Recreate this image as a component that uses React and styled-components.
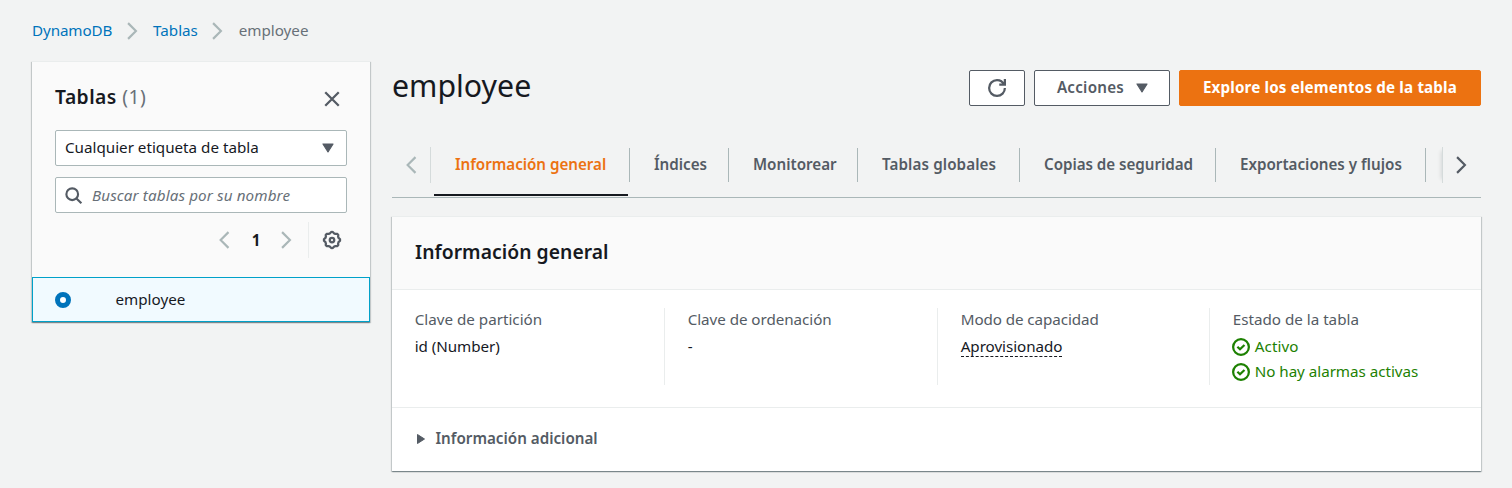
import React from "react";
import styled, { createGlobalStyle } from "styled-components";

const GlobalStyle = createGlobalStyle`
  *, *::before, *::after { box-sizing: border-box; }
  body {
    margin: 0;
    background: #f2f3f3;
    color: #16191f;
    font-family: "Noto Sans", "Open Sans", sans-serif;
    font-size: 15.2px;
    line-height: 22px;
  }
  h1, h2, p, dl, dd, dt, ul { margin: 0; padding: 0; }
  button, input { font: inherit; color: inherit; }
`;

const Svg = styled.svg`
  display: block;
  flex: none;
  width: ${(p) => p.$size || 18}px;
  height: ${(p) => p.$size || 18}px;
  fill: none;
  stroke: currentColor;
  stroke-width: ${(p) => p.$stroke || 2};
  overflow: visible;
`;

const Icon = ({ size, stroke, className, children }) => (
  <Svg viewBox="0 0 16 16" $size={size} $stroke={stroke} className={className} aria-hidden="true">
    {children}
  </Svg>
);

const AngleRight = (p) => <Icon stroke={1.9} {...p}><path d="m4.5 1 7 7-7 7" /></Icon>;
const AngleLeft = (p) => <Icon stroke={1.9} {...p}><path d="m12 1-7 7 7 7" /></Icon>;
const Close = (p) => <Icon {...p}><path d="m2 2 12 12M14 2 2 14" /></Icon>;
const Search = (p) => <Icon {...p}><circle cx="6.8" cy="6.8" r="5.5" /><path d="m15.4 15.4-4.6-4.6" /></Icon>;
const Refresh = (p) => (
  <Icon {...p}>
    <path d="M10 5h5V0M15 8a6.957 6.957 0 0 1-7 7 6.957 6.957 0 0 1-7-7 6.957 6.957 0 0 1 7-7 6.87 6.87 0 0 1 6.3 4" />
  </Icon>
);
const Check = (p) => <Icon {...p}><circle cx="8" cy="8" r="7" /><path d="m4.8 7.8 2.3 2.2 4-3.8" /></Icon>;
const CaretDown = (p) => <Icon stroke={1} {...p}><path fill="currentColor" strokeLinejoin="round" d="M3.5 4.5h9L8 11.5z" /></Icon>;
const CaretRight = (p) => <Icon stroke={1} {...p}><path fill="currentColor" strokeLinejoin="round" d="M4.5 3.5v9l7-4.5z" /></Icon>;

const gearPath = Array.from({ length: 64 }, (_, i) => {
  const a = (i / 64) * Math.PI * 2;
  const r = 6.65 + 0.5 * Math.max(-1, Math.min(1, 1.9 * Math.cos(8 * a)));
  return `${i ? "L" : "M"}${(8 + r * Math.cos(a)).toFixed(2)} ${(8 + r * Math.sin(a)).toFixed(2)}`;
}).join("") + "Z";
const Gear = (p) => <Icon {...p}><path d={gearPath} /><circle cx="8" cy="8" r="2" /></Icon>;

const Page = styled.div`
  height: 488px;
  padding: 18px 31px 0 32px;
  overflow: hidden;
`;

const Breadcrumbs = styled.nav`
  display: flex;
  align-items: center;
  height: 24px;
  color: #687078;
  svg { color: #aab7b8; margin: 1px 12.4px 0 10.4px; }
`;

const Crumb = styled.a`
  color: #0073bb;
  text-decoration: none;
  letter-spacing: ${(p) => p.$track || 0}px;
`;

const Columns = styled.div`
  display: grid;
  grid-template-columns: 338px 1089px;
  gap: 22px;
  align-items: start;
  padding-top: 19px;
`;

const Panel = styled.section`
  background: #fff;
  border-top: 1px solid #eaeded;
  box-shadow: 0 1px 1px 0 rgba(0, 28, 36, 0.3), 1px 1px 1px 0 rgba(0, 28, 36, 0.15),
    -1px 1px 1px 0 rgba(0, 28, 36, 0.15);
`;

const SideHead = styled.div`
  display: flex;
  flex-direction: column;
  height: 215px;
  padding: 22px 23px 0;
  background: #fafafa;
`;

const TitleRow = styled.div`
  display: flex;
  justify-content: space-between;
  align-items: center;
  height: 26px;
  padding-right: 6px;
  margin-bottom: 20px;
  svg { color: #545b64; margin-top: 3px; }
`;

const Heading = styled.h2`
  font-size: 19.3px;
  font-weight: 600;
  line-height: 26px;
  letter-spacing: ${(p) => p.$track || 0.05}px;
`;

const Counter = styled.span`
  color: #687078;
  font-weight: 400;
`;

const Field = styled.div`
  display: flex;
  align-items: center;
  gap: 10px;
  height: 36px;
  padding: 0 9px;
  margin-bottom: 11px;
  background: #fff;
  border: 1px solid #aab7b8;
  border-radius: 2px;
  svg { color: #545b64; }
`;

const SelectField = styled(Field)`
  justify-content: space-between;
`;

const SelectText = styled.span`
  padding-bottom: 2px;
`;

const SearchInput = styled.input`
  flex: 1;
  min-width: 0;
  padding: 0;
  border: 0;
  outline: 0;
  background: none;
  font-style: italic;
  letter-spacing: 0.12px;
  &::placeholder { color: #687078; opacity: 1; }
`;

const Pager = styled.div`
  display: flex;
  justify-content: flex-end;
  align-items: center;
  height: 36px;
  margin-top: -2px;
  padding-right: 6px;
  font-weight: 700;
  svg { color: #aab7b8; }
`;

const PageNumber = styled.span`
  width: 44px;
  padding: 0 0 1px 2px;
  text-align: center;
`;

const Preferences = styled.span`
  display: flex;
  align-items: center;
  height: 36px;
  margin-left: 13px;
  padding-left: 14px;
  border-left: 1px solid #eaeded;
  svg { color: #545b64; }
`;

const TableRow = styled.div`
  display: flex;
  align-items: center;
  gap: 45px;
  height: 45px;
  padding-left: 21.5px;
  background: #f1faff;
  border: 1px solid #00a1c9;
`;

const RowName = styled.span`
  padding-bottom: 2px;
`;

const Radio = styled.span`
  width: 16px;
  height: 16px;
  border: 5px solid #0073bb;
  border-radius: 50%;
  background: #fff;
`;

const TopBar = styled.header`
  display: flex;
  align-items: center;
  justify-content: space-between;
  height: 36px;
  margin-top: 9px;
`;

const PageTitle = styled.h1`
  font-size: 30.3px;
  font-weight: 400;
  line-height: 36px;
  padding-bottom: 4px;
`;

const Actions = styled.div`
  display: flex;
  gap: 9px;
`;

const Button = styled.button`
  display: flex;
  align-items: center;
  justify-content: center;
  gap: 9px;
  width: ${(p) => p.$width}px;
  height: 36px;
  padding: 0 0 0 ${(p) => p.$inset || 0}px;
  font-weight: ${(p) => (p.$primary ? 700 : 600)};
  letter-spacing: ${(p) => (p.$primary ? 0.15 : 0.25)}px;
  color: ${(p) => (p.$primary ? "#fff" : "#545b64")};
  background: ${(p) => (p.$primary ? "#ec7211" : "#fff")};
  border: 1px solid ${(p) => (p.$primary ? "#ec7211" : "#545b64")};
  border-radius: 2px;
`;

const ButtonText = styled.span`
  padding-bottom: 2px;
`;

const TabBar = styled.div`
  display: flex;
  height: 60px;
  margin-top: 32px;
  border-bottom: 1px solid #aab7b8;
`;

const TabArrow = styled.div`
  display: flex;
  align-items: center;
  justify-content: center;
  width: 39px;
  height: 36px;
  margin-top: 9px;
  color: ${(p) => (p.$disabled ? "#aab7b8" : "#545b64")};
  border-style: solid;
  border-color: #d5dbdb;
  border-width: ${(p) => (p.$disabled ? "0 1px 0 0" : "0 0 0 1px")};
  box-shadow: ${(p) => (p.$disabled ? "none" : "-5px 0 4px -4px rgba(0, 28, 36, 0.12)")};
  padding-right: ${(p) => (p.$disabled ? 0 : 2)}px;
`;

const TabList = styled.div`
  display: flex;
  flex: 1;
  padding-left: 3px;
`;

const Tab = styled.div`
  display: flex;
  width: ${(p) => p.$width}px;
  padding-top: 9px;
  margin: 0 ${(p) => (p.$active ? 1 : 0)}px 1px 0;
  color: ${(p) => (p.$active ? "#ec7211" : "#545b64")};
  font-weight: 600;
  border-bottom: 2px solid ${(p) => (p.$active ? "#16191f" : "transparent")};
`;

const TabLabel = styled.span`
  display: flex;
  align-items: center;
  width: 100%;
  height: 34px;
  padding-left: ${(p) => (p.$active ? 21 : 24)}px;
  white-space: nowrap;
  letter-spacing: ${(p) => p.$track || 0}px;
`;

const TabDivider = styled.span`
  width: 1px;
  height: 34px;
  margin-top: 10px;
  background: #aab7b8;
`;

const Overview = styled(Panel)`
  margin-top: 18px;
`;

const OverviewHead = styled.div`
  display: flex;
  align-items: center;
  height: 73px;
  padding: 0 23px 2px;
  background: #fafafa;
  border-bottom: 1px solid #eaeded;
`;

const Details = styled.dl`
  display: grid;
  grid-template-columns: 273px 273px 272px 1fr;
  height: 118px;
  padding: 18px 0 23px;
  border-bottom: 1px solid #eaeded;
`;

const Detail = styled.div`
  padding-left: 22.7px;
  border-right: 1px solid ${(p) => (p.$last ? "transparent" : "#eaeded")};
`;

const Term = styled.dt`
  height: 27px;
  color: #545b64;
  letter-spacing: ${(p) => p.$track || 0}px;
`;

const Value = styled.dd`
  height: 25px;
  letter-spacing: ${(p) => p.$track || 0}px;
`;

const Hint = styled.span`
  display: inline-block;
  height: 22px;
  border-bottom: 1px dashed #16191f;
`;

const Status = styled(Value)`
  display: flex;
  align-items: flex-start;
  gap: 5px;
  color: #1d8102;
  svg { margin: 3px 0 0 -1px; }
`;

const Expander = styled.div`
  display: flex;
  align-items: center;
  gap: 7px;
  height: 63px;
  padding: 0 0 1px 20.5px;
  color: #545b64;
  font-weight: 600;
`;

const ExpanderText = styled.span`
  padding-bottom: 2px;
`;

const tabs = [
  { label: "Información general", width: 194, active: true, track: -0.03 },
  { label: "Índices", width: 98 },
  { label: "Monitorear", width: 128 },
  { label: "Tablas globales", width: 161, track: 0.1 },
  { label: "Copias de seguridad", width: 195, track: -0.05 },
  { label: "Exportaciones y flujos", width: 209 },
];

export default function App() {
  return (
    <Page>
      <GlobalStyle />
      <Breadcrumbs>
        <Crumb href="#" $track={-0.1}>DynamoDB</Crumb>
        <AngleRight />
        <Crumb href="#">Tablas</Crumb>
        <AngleRight />
        <span>employee</span>
      </Breadcrumbs>
      <Columns>
        <Panel>
          <SideHead>
            <TitleRow>
              <Heading $track={0.45}>Tablas <Counter>(1)</Counter></Heading>
              <Close />
            </TitleRow>
            <SelectField>
              <SelectText>Cualquier etiqueta de tabla</SelectText>
              <CaretDown />
            </SelectField>
            <Field>
              <Search size={17} />
              <SearchInput placeholder="Buscar tablas por su nombre" />
            </Field>
            <Pager>
              <AngleLeft />
              <PageNumber>1</PageNumber>
              <AngleRight />
              <Preferences><Gear /></Preferences>
            </Pager>
          </SideHead>
          <TableRow>
            <Radio />
            <RowName>employee</RowName>
          </TableRow>
        </Panel>
        <main>
          <TopBar>
            <PageTitle>employee</PageTitle>
            <Actions>
              <Button $width={56} aria-label="Actualizar"><Refresh /></Button>
              <Button $width={136} $inset={4}>
                <ButtonText>Acciones</ButtonText>
                <CaretDown />
              </Button>
              <Button $width={302} $primary>
                <ButtonText>Explore los elementos de la tabla</ButtonText>
              </Button>
            </Actions>
          </TopBar>
          <TabBar>
            <TabArrow $disabled><AngleLeft /></TabArrow>
            <TabList>
              {tabs.map((t) => (
                <React.Fragment key={t.label}>
                  <Tab $width={t.width} $active={t.active}>
                    <TabLabel $track={t.track} $active={t.active}>{t.label}</TabLabel>
                  </Tab>
                  <TabDivider />
                </React.Fragment>
              ))}
            </TabList>
            <TabArrow><AngleRight /></TabArrow>
          </TabBar>
          <Overview>
            <OverviewHead><Heading>Información general</Heading></OverviewHead>
            <Details>
              <Detail>
                <Term>Clave de partición</Term>
                <Value $track={-0.05}>id (Number)</Value>
              </Detail>
              <Detail>
                <Term $track={-0.05}>Clave de ordenación</Term>
                <Value>-</Value>
              </Detail>
              <Detail>
                <Term $track={-0.08}>Modo de capacidad</Term>
                <Value $track={-0.05}><Hint>Aprovisionado</Hint></Value>
              </Detail>
              <Detail $last>
                <Term>Estado de la tabla</Term>
                <Status $track={0.1}><Check />Activo</Status>
                <Status $track={-0.03}><Check />No hay alarmas activas</Status>
              </Detail>
            </Details>
            <Expander>
              <CaretRight size={16} />
              <ExpanderText>Información adicional</ExpanderText>
            </Expander>
          </Overview>
        </main>
      </Columns>
    </Page>
  );
}
